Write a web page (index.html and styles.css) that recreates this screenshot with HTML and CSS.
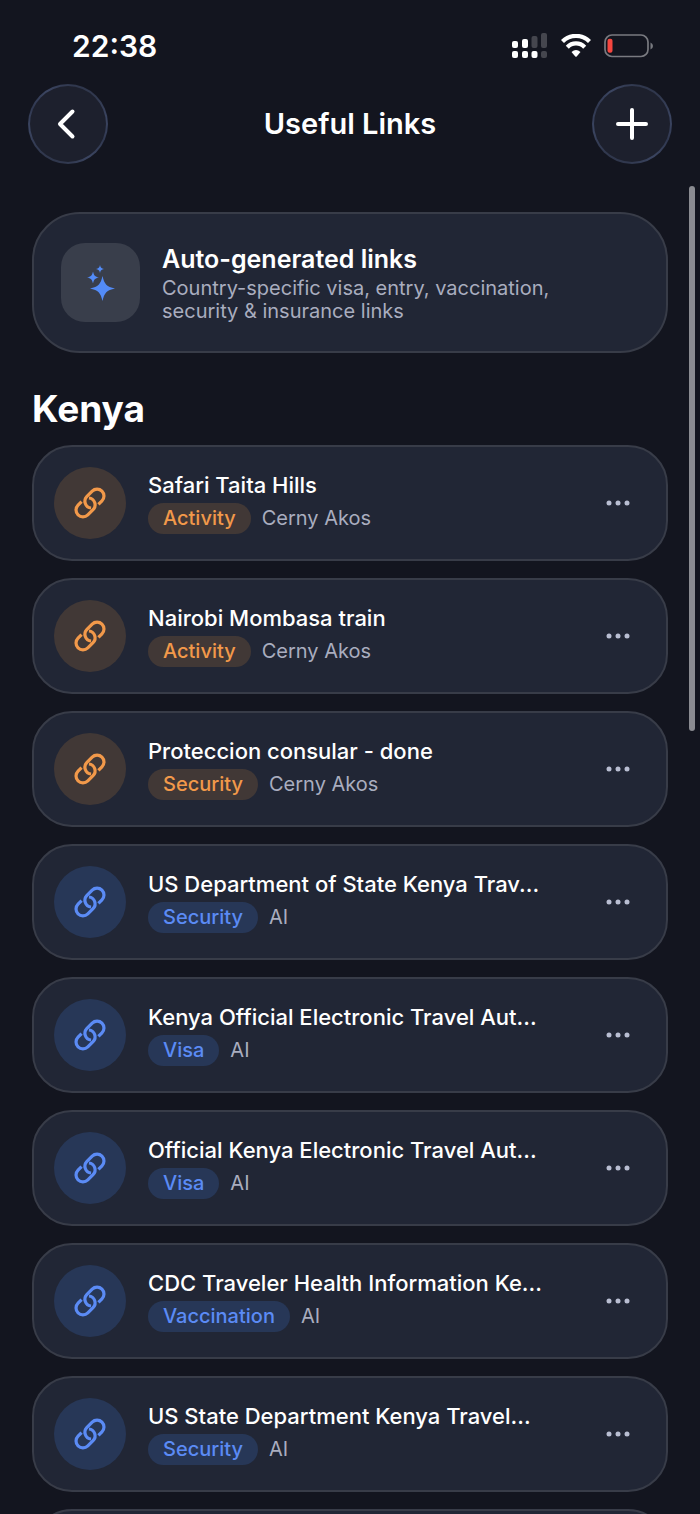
FILE: index.html
```html
<!DOCTYPE html>
<html lang="en">
<head>
<meta charset="utf-8">
<meta name="viewport" content="width=device-width, initial-scale=1">
<title>Useful Links</title>
<link rel="stylesheet" href="styles.css">
</head>
<body>
<svg class="defs" aria-hidden="true">
  <symbol id="link" viewBox="-16 -16 32 32">
    <g transform="rotate(-45)" fill="none" stroke="currentColor" stroke-width="3.200">
      <path d="M5 6.900H10A6.900 6.900 0 0 0 10 -6.900H2.600A6.900 6.900 0 0 0 -2.800 4.300"/>
      <path d="M-5 -6.900H-10A6.900 6.900 0 0 0 -10 6.900H-2.600A6.900 6.900 0 0 0 2.800 -4.300"/>
    </g>
  </symbol>
  <symbol id="dots" viewBox="0 0 24 6">
    <g fill="currentColor"><circle cx="3" cy="3" r="2.500"/><circle cx="12" cy="3" r="2.500"/><circle cx="21" cy="3" r="2.500"/></g>
  </symbol>
  <symbol id="star" viewBox="-12 -12 24 24">
    <path d="M0 -12C1.800 -4 4 -1.800 12 0C4 1.800 1.800 4 0 12C-1.800 4 -4 1.800 -12 0C-4 -1.800 -1.800 -4 0 -12Z"/>
  </symbol>
</svg>
<div class="screen">
  <div class="status">
    <span class="time">22:38</span>
    <div class="indicators">
      <svg width="36" height="26" viewBox="0 0 36 26" fill="#fff" aria-label="Signal">
        <rect x="0" y="8" width="6" height="7" rx="2"/><rect x="10" y="6" width="6" height="9" rx="2"/>
        <rect x="19.500" y="3" width="6" height="12" rx="2" fill="#45464e"/><rect x="29" y="0" width="6" height="15" rx="2" fill="#45464e"/>
        <rect x="0" y="18" width="6" height="7" rx="2"/><rect x="10" y="18" width="6" height="7" rx="2"/>
        <rect x="19.500" y="18" width="6" height="7" rx="2"/><rect x="29" y="18" width="6" height="7" rx="2" fill="#45464e"/>
      </svg>
      <svg width="30" height="24" viewBox="0 0 30 24" aria-label="Wi-Fi">
        <path d="M1.500 7.500A19 19 0 0 1 28.500 7.500" fill="none" stroke="#fff" stroke-width="4.200"/>
        <path d="M6.300 13.200A12 12 0 0 1 23.700 13.200" fill="none" stroke="#fff" stroke-width="4.200"/>
        <path d="M10.500 18Q15 14.200 19.500 18L15.700 22.400Q15 23.100 14.300 22.400Z" fill="#fff"/>
      </svg>
      <svg width="50" height="24" viewBox="0 0 50 24" aria-label="Battery low">
        <rect x="1" y="1" width="43" height="21.500" rx="7" fill="none" stroke="#797a80" stroke-width="1.700"/>
        <rect x="3.500" y="4.800" width="5" height="14" rx="2" fill="#f5463f"/>
        <path d="M46.500 8.500Q49 9.500 49 12T46.500 15.500Z" fill="#797a80"/>
      </svg>
    </div>
  </div>
  <header class="nav">
    <button class="round" type="button" aria-label="Back"><svg width="40" height="40" viewBox="0 0 40 40"><path d="M24.500 7.500L12 20L24.500 32.500"/></svg></button>
    <h1>Useful Links</h1>
    <button class="round" type="button" aria-label="Add link"><svg width="40" height="40" viewBox="0 0 40 40"><path d="M20 6V34M6 20H34"/></svg></button>
  </header>
  <main>
    <section class="promo">
      <div class="tile"><svg width="30" height="38" viewBox="0 0 30 38" fill="#538bf7"><use href="#star" x="4" y="12" width="25" height="25"/><use href="#star" x="1" y="7.500" width="12" height="12"/><use href="#star" x="10" y="1" width="8" height="8"/></svg></div>
      <div>
        <h3>Auto-generated links</h3>
        <p>Country-specific visa, entry, vaccination,<br>security &amp; insurance links</p>
      </div>
    </section>
    <h2>Kenya</h2>
    <ul class="list">
      <li class="card orange"><span class="icon"><svg><use href="#link"/></svg></span><div class="body"><h3>Safari Taita Hills</h3><div class="meta"><span class="tag">Activity</span><span>Cerny Akos</span></div></div><button class="more" type="button" aria-label="More"><svg><use href="#dots"/></svg></button></li>
      <li class="card orange"><span class="icon"><svg><use href="#link"/></svg></span><div class="body"><h3>Nairobi Mombasa train</h3><div class="meta"><span class="tag">Activity</span><span>Cerny Akos</span></div></div><button class="more" type="button" aria-label="More"><svg><use href="#dots"/></svg></button></li>
      <li class="card orange"><span class="icon"><svg><use href="#link"/></svg></span><div class="body"><h3>Proteccion consular - done</h3><div class="meta"><span class="tag">Security</span><span>Cerny Akos</span></div></div><button class="more" type="button" aria-label="More"><svg><use href="#dots"/></svg></button></li>
      <li class="card"><span class="icon"><svg><use href="#link"/></svg></span><div class="body"><h3>US Department of State Kenya Trav...</h3><div class="meta"><span class="tag">Security</span><span>AI</span></div></div><button class="more" type="button" aria-label="More"><svg><use href="#dots"/></svg></button></li>
      <li class="card"><span class="icon"><svg><use href="#link"/></svg></span><div class="body"><h3>Kenya Official Electronic Travel Aut...</h3><div class="meta"><span class="tag">Visa</span><span>AI</span></div></div><button class="more" type="button" aria-label="More"><svg><use href="#dots"/></svg></button></li>
      <li class="card"><span class="icon"><svg><use href="#link"/></svg></span><div class="body"><h3>Official Kenya Electronic Travel Aut...</h3><div class="meta"><span class="tag">Visa</span><span>AI</span></div></div><button class="more" type="button" aria-label="More"><svg><use href="#dots"/></svg></button></li>
      <li class="card"><span class="icon"><svg><use href="#link"/></svg></span><div class="body"><h3>CDC Traveler Health Information Ke...</h3><div class="meta"><span class="tag">Vaccination</span><span>AI</span></div></div><button class="more" type="button" aria-label="More"><svg><use href="#dots"/></svg></button></li>
      <li class="card"><span class="icon"><svg><use href="#link"/></svg></span><div class="body"><h3>US State Department Kenya Travel...</h3><div class="meta"><span class="tag">Security</span><span>AI</span></div></div><button class="more" type="button" aria-label="More"><svg><use href="#dots"/></svg></button></li>
      <li class="card"></li>
    </ul>
  </main>
  <div class="scrollbar"></div>
</div>
</body>
</html>
```
FILE: styles.css
```css
* { box-sizing: border-box; }
body { margin: 0; background: #13151f; color: #fff; font-family: Inter, "Liberation Sans", sans-serif; }
h1, h2, h3, p, ul { margin: 0; padding: 0; }
button { padding: 0; border: 0; background: none; color: inherit; font: inherit; }
svg { display: block; }
.defs { position: absolute; width: 0; height: 0; }
.screen { position: relative; height: 100vh; overflow: hidden; }

.status { display: flex; justify-content: space-between; align-items: center; height: 84px; padding: 8px 46px 0 72px; }
.time { font-size: 30px; line-height: 36px; font-weight: 600; }
.indicators { display: flex; align-items: center; gap: 13px; }

.nav { display: flex; justify-content: space-between; align-items: center; padding: 0 28px; }
.nav h1 { font-size: 29px; line-height: 40px; font-weight: 600; }
.round { display: grid; place-items: center; width: 80px; height: 80px; border: 2px solid transparent; border-radius: 50%;
  background: linear-gradient(#1d202d, #1d202d) padding-box, linear-gradient(25deg, #262b3b, #3b4561 30%, #303850 50%, #3b4561 70%, #262b3b) border-box; }
.round svg { fill: none; stroke: #fff; stroke-width: 4; stroke-linecap: round; stroke-linejoin: round; }

main { padding: 48px 32px 0; }
.promo, .card { display: flex; align-items: center; border: 2px solid #383c48; border-radius: 40px; background: #212635; }
.promo { height: 141px; padding: 0 27px; gap: 22px; border-radius: 48px; }
.tile { display: grid; place-items: center; flex: none; width: 79px; height: 79px; border-radius: 24px; background: #393e4b; }
.promo h3 { padding-bottom: 2px; font-size: 25px; line-height: 32px; font-weight: 600; }
.promo p { font-size: 20px; line-height: 23px; color: #a9adbf; }
h2 { padding: 32px 0 12px; font-size: 37px; line-height: 48px; font-weight: 700; }

.list { display: grid; gap: 17px; list-style: none; }
.card { height: 116px; padding: 0 20px; gap: 22px; }
.icon { display: grid; place-items: center; flex: none; width: 72px; height: 72px; border-radius: 50%; color: #5b8bf5; background: #273757; }
.icon svg { width: 32px; height: 32px; }
.body { flex: 1; min-width: 0; padding-bottom: 3px; }
.body h3 { font-size: 22px; line-height: 32px; font-weight: 500; white-space: nowrap; }
.meta { display: flex; align-items: center; gap: 11px; margin-top: 2px; font-size: 20px; line-height: 31px; color: #a9adbf; }
.tag { padding: 0 15px; border-radius: 16px; font-weight: 500; color: #5b8bf5; background: #273757; }
.orange .icon, .orange .tag { color: #f2994a; background: #413836; }
.more { display: grid; place-items: center; flex: none; width: 56px; height: 56px; color: #b9bed2; }
.more svg { width: 24px; height: 6px; }
.scrollbar { position: absolute; top: 186px; right: 5px; width: 6px; height: 36%; border-radius: 3px; background: #8a8b91; }
```
